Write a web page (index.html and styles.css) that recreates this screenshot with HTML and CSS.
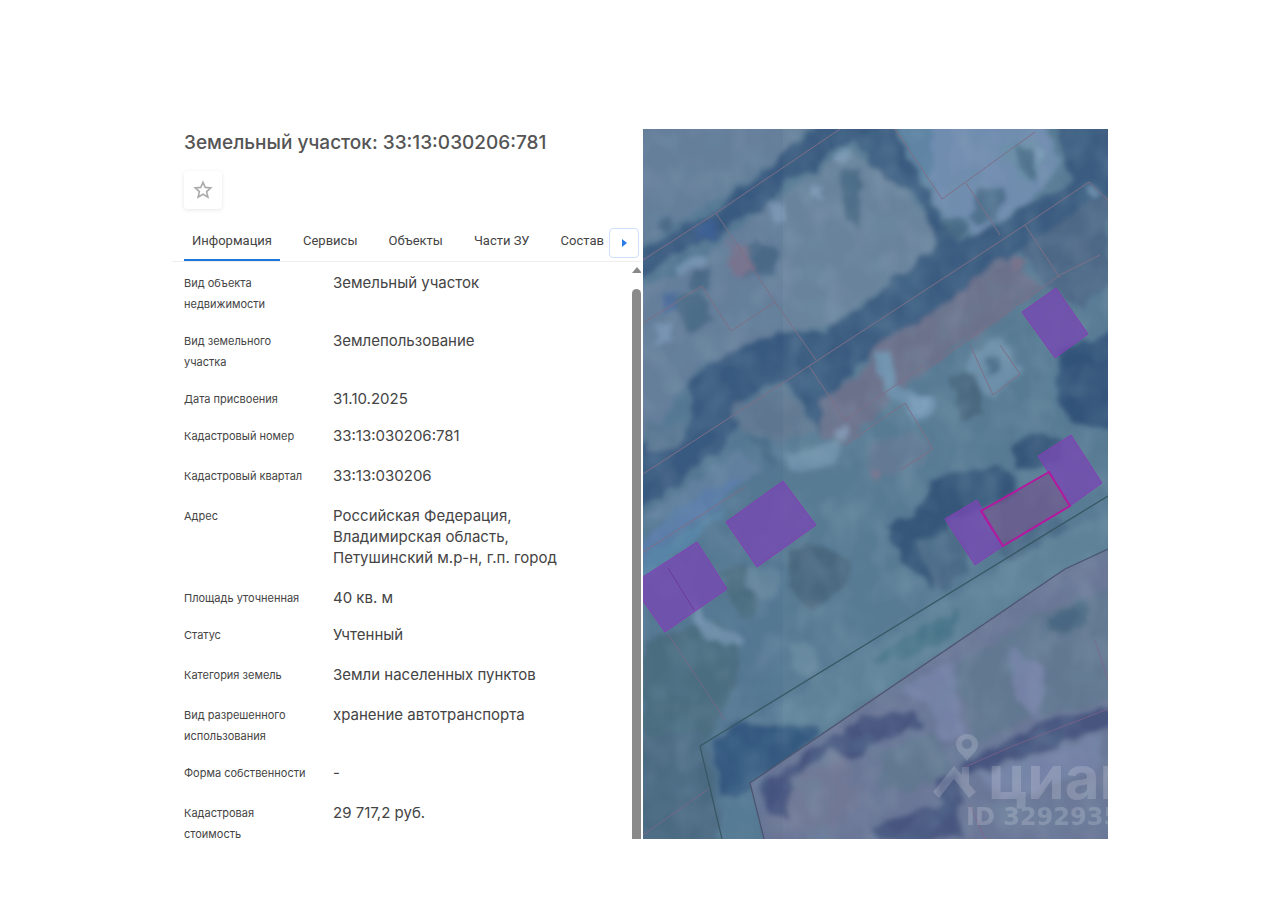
FILE: index.html
```html
<!DOCTYPE html>
<html lang="ru">
<head>
    <meta charset="UTF-8">
    <meta name="viewport" content="width=device-width, initial-scale=1.0">
    <title>Земельный участок: 33:13:030206:781</title>
    <link rel="stylesheet" href="styles.css">
</head>
<body>
    <main class="page">
        <section class="panel">
            <header class="panel-header">
                <h1>Земельный участок: 33:13:030206:781</h1>
                <button class="favorite" type="button" aria-label="В избранное">
                    <svg width="20" height="20" viewBox="0 0 20 20">
                        <path d="M10 2.2 12.2 7.4 17.8 7.9 13.6 11.6 14.9 17.1 10 14.2 5.1 17.1 6.4 11.6 2.2 7.9 7.8 7.4Z"/>
                    </svg>
                </button>
            </header>

            <nav class="tabs">
                <div class="tab-list">
                    <a class="tab active" href="#info">Информация</a>
                    <a class="tab" href="#services">Сервисы</a>
                    <a class="tab" href="#objects">Объекты</a>
                    <a class="tab" href="#parts">Части ЗУ</a>
                    <a class="tab" href="#structure">Состав</a>
                </div>
                <button class="tabs-next" type="button" aria-label="Дальше">
                    <svg width="5" height="8" viewBox="0 0 5 8"><path d="M0 0 5 4 0 8Z"/></svg>
                </button>
            </nav>

            <div class="content" id="info">
                <dl class="info">
                    <div class="row tight"><dt>Вид объекта недвижимости</dt><dd>Земельный участок</dd></div>
                    <div class="row tight"><dt>Вид земельного участка</dt><dd>Землепользование</dd></div>
                    <div class="row tight"><dt>Дата присвоения</dt><dd>31.10.2025</dd></div>
                    <div class="row"><dt>Кадастровый номер</dt><dd>33:13:030206:781</dd></div>
                    <div class="row"><dt>Кадастровый квартал</dt><dd>33:13:030206</dd></div>
                    <div class="row"><dt>Адрес</dt><dd>Российская Федерация, Владимирская область, Петушинский м.р-н, г.п. город</dd></div>
                    <div class="row tight"><dt>Площадь уточненная</dt><dd>40 кв. м</dd></div>
                    <div class="row"><dt>Статус</dt><dd>Учтенный</dd></div>
                    <div class="row"><dt>Категория земель</dt><dd>Земли населенных пунктов</dd></div>
                    <div class="row tight"><dt>Вид разрешенного использования</dt><dd>хранение автотранспорта</dd></div>
                    <div class="row"><dt>Форма собственности</dt><dd>-</dd></div>
                    <div class="row"><dt>Кадастровая стоимость</dt><dd>29 717,2 руб.</dd></div>
                </dl>
                <div class="scrollbar">
                    <svg width="10" height="6" viewBox="0 0 10 6"><path d="M5 0 10 6H0Z"/></svg>
                    <div class="thumb"></div>
                </div>
            </div>
        </section>

        <section class="map">
            <svg class="map-view" viewBox="643 129 465 710" preserveAspectRatio="xMidYMid slice">
                <defs>
                    <filter id="soft" x="-5%" y="-5%" width="110%" height="110%">
                        <feTurbulence type="fractalNoise" baseFrequency="0.07" numOctaves="1" seed="4" result="n"/>
                        <feDisplacementMap in="SourceGraphic" in2="n" scale="16" xChannelSelector="R" yChannelSelector="G"/>
                        <feGaussianBlur stdDeviation="2.5"/>
                    </filter>
                    <filter id="shade" x="0" y="0" width="100%" height="100%">
                        <feTurbulence type="fractalNoise" baseFrequency="0.03" numOctaves="2" seed="11"/>
                        <feColorMatrix values="0 0 0 0 0.16  0 0 0 0 0.31  0 0 0 0 0.4  2 0 0 0 -0.85"/>
                    </filter>
                    <filter id="light" x="0" y="0" width="100%" height="100%">
                        <feTurbulence type="fractalNoise" baseFrequency="0.04 0.03" numOctaves="2" seed="23"/>
                        <feColorMatrix values="0 0 0 0 0.53  0 0 0 0 0.62  0 0 0 0 0.7  2 0 0 0 -0.85"/>
                    </filter>
                </defs>

                <!-- снимок -->
                <rect x="643" y="129" width="465" height="710" fill="#587b94"/>
                <g filter="url(#soft)">
                    <path fill="#6a839d" d="M620 110H830L790 150 730 190 620 260ZM620 300 700 260 790 190 850 150 900 185 950 250 900 275 830 325 770 335 700 365 650 435 620 450Z"/>
                    <path fill="#5f84a4" d="M890 115H945L945 200 925 185Z"/>
                    <path fill="#6f8caf" d="M932 110H1045L1060 165 1035 200 975 235 945 220 932 195Z"/>
                    <path fill="#3b5b80" d="M630 260 690 222 718 212 728 195 745 185 770 168 785 148 805 140 825 115H885L905 150 925 185 945 225 960 242 1010 215 1070 185 1055 115H1120V190L1085 215 1035 240 1005 260 985 280 950 300 925 320 890 335 870 355 840 385 820 400 820 435 800 400 785 380 745 395 735 430 715 455 680 480 660 498 630 510V452L655 435 690 425 690 385 705 365 740 345 775 335 825 330 870 300 900 275 925 255 940 240 915 195 885 180 855 140 830 150 815 172 785 182 760 212 735 220 715 240 690 245 670 255 655 270 630 285Z"/>
                    <path fill="#5f7d95" d="M645 425 690 420 680 445 645 450Z"/>
                    <path fill="#4d6886" d="M1040 235 1108 190V280L1080 310 1045 285 1020 250Z"/>
                    <path fill="#6c718b" d="M1005 255 1045 290 960 345 890 400 845 445 820 435 820 400 865 370 875 345 930 315 950 300Z"/>
                    <path fill="#637a93" d="M730 410 780 382 800 405 820 430 785 440 740 430Z"/>
                    <path fill="#6d91ad" d="M875 350 890 352 895 385 935 395 935 415 915 425 895 400 875 375Z"/>
                    <path fill="#6684a2" d="M740 450 760 470 720 490 660 520 640 520 690 485 730 455Z"/>
                    <path fill="#5f82ad" d="M640 545 680 505 745 475 715 510 690 525 640 560Z"/>
                    <path fill="#5b8aab" d="M640 560 720 510 740 495 700 535 670 560 640 580Z"/>
                    <path fill="#637994" d="M868 445 910 430 935 450 900 475 870 475Z"/>
                    <path fill="#6d8fa9" d="M970 350 1000 340 1020 370 995 400 965 385ZM785 455 840 440 835 460 790 475ZM1000 150 1030 140 1050 160 1025 180Z"/>
                    <path fill="#305379" d="M1060 350 1115 330V430L1070 420 1055 395Z"/>
                    <path fill="#365779" d="M1015 445 1040 430 1060 440 1060 465 1015 470ZM885 525 915 515 930 485 960 470 1005 468 1020 490 985 510 950 520 945 560 935 590 905 565Z"/>
                    <path fill="#48687f" d="M950 375 975 375 985 415 960 420ZM790 550 820 545 850 560 845 590 810 610 790 590Z"/>
                    <path fill="#4b6b87" d="M990 545 1060 515 1080 545 1020 565ZM915 540 960 530 970 570 940 590Z"/>
                    <path fill="#4d7080" d="M643 640 720 620 740 650 730 700 710 740 643 760ZM720 570 750 565 760 610 740 620Z"/>
                    <path fill="#4d6d83" d="M630 740 700 730 715 770 720 850H630Z"/>
                    <path fill="#68899f" d="M750 565 780 570 775 600 745 590ZM790 640 820 650 810 680 790 670Z"/>
                    <path fill="#5f8299" d="M740 728 870 645 1065 530 1108 515 1108 550 1065 570 870 700 820 730 770 728Z"/>
                    <path fill="#49748a" d="M870 660 905 635 960 610 950 640 900 660Z"/>
                    <path fill="#345a80" d="M710 745 735 725 820 725 815 740 755 785 745 800 725 795Z"/>
                    <path fill="#5a7f96" d="M722 800 750 795 765 850H725Z"/>
                    <path fill="#4f7088" d="M670 300 700 290 715 320 690 335Z"/>
                </g>
                <path fill="#6b7797" d="M750 783 870 700 1065 569 1108 550V839H764Z"/>
                <g filter="url(#soft)">
                    <path fill="#46547f" d="M757 788 820 745 860 718 915 712 925 725 870 745 850 765 830 745 800 775 790 820 770 815ZM960 765 1000 745 1050 720 1115 708V725L1030 755 970 775ZM935 780 955 770 965 800 945 810ZM870 830 950 800 970 835 900 845Z"/>
                    <path fill="#627790" d="M955 665 1000 640 1040 610 1115 590V700L1040 715 975 745ZM880 755 935 730 950 770 920 790 880 790Z"/>
                    <path fill="#7481a6" d="M900 690 950 660 965 740 940 740 930 705ZM1010 650 1045 670 1040 720 1015 700ZM980 775 1100 735 1100 770 1000 800Z"/>
                    <path fill="#707895" d="M790 780 840 750 860 800 830 830 790 830ZM765 815 782 815 782 845 770 845Z"/>
                </g>
                <g filter="url(#soft)" opacity="0.65">
                    <path fill="#3e607b" d="M660 220 672 220 670 232 658 230ZM695 270 712 268 705 290 690 285ZM735 250 758 240 780 255 775 275 745 275ZM838 170 860 170 860 230 845 215ZM980 190 1005 190 995 225 970 220ZM1015 145 1030 150 1035 180 1020 170ZM985 360 1000 355 1000 370 988 375ZM1045 620 1080 600 1090 620 1060 635ZM945 215 970 225 960 240 940 235ZM750 435 770 470 780 465 765 435Z"/>
                    <path fill="#87a6c3" d="M810 185 825 185 825 197 810 197ZM770 205 785 203 785 218 772 218ZM838 148 852 150 848 162 835 160ZM1085 185 1098 190 1095 198 1085 195ZM830 430 850 425 845 440 830 440ZM655 325 670 320 675 340 655 345ZM1030 150 1045 150 1040 165ZM690 600 715 625 745 640 740 650 700 635ZM905 395 930 395 925 415 910 415ZM675 265 700 255 705 262 680 275Z"/>
                    <path fill="#4163a0" d="M660 295 680 290 678 312 662 310ZM695 225 715 220 715 240 695 240Z"/>
                    <path fill="#8b7088" d="M725 240 740 245 755 270 735 275ZM1010 255 1025 260 1015 275ZM870 470 885 475 880 485Z"/>
                </g>
                <rect x="643" y="129" width="465" height="710" filter="url(#shade)" opacity="0.3"/>
                <rect x="643" y="129" width="465" height="710" filter="url(#light)" opacity="0.13"/>
                <rect x="643" y="129" width="140" height="710" fill="#2c4d80" opacity="0.07"/>

                <!-- границы участков -->
                <g class="bounds">
                    <path d="M643 260 716 213 840 129M716 213 775 302 816 360M643 323 702 286 731 331 775 302M643 474 809 366 1025 225 1089 182 1108 200M809 366 845 420 925 365M895 129 942 199 1035 132M966 183 1000 235M1025 225 1060 278M643 552 745 487M845 445 905 403 933 449 900 470M925 370 1060 275 1100 255M970 345 993 395 1020 374 1000 345"/>
                    <path class="red" d="M668 634 725 720M643 835 710 788M965 767 1015 745 1108 709M970 805 985 839M1095 640 1108 680"/>
                </g>
                <path class="road" d="M722 839 700 746 1108 496"/>
                <path class="road dim" d="M764 839 750 783 1065 569 1108 549"/>

                <!-- объекты -->
                <g class="buildings">
                    <path d="M1022 312 1056 288 1088 334 1055 358Z"/>
                    <path d="M726 522 783 481 816 525 757 567Z"/>
                    <path d="M643 577 697 542 727 589 665 632 643 601Z"/>
                    <path d="M1038 456 1071 435 1102 483 1070 506Z"/>
                    <path d="M945 519 977 500 1003 546 975 565Z"/>
                </g>
                <path class="split" d="M668 568 694 610"/>
                <path class="selected" d="M981 511 1049 472 1070 506 1003 546Z"/>

                <!-- водяной знак -->
                <g class="watermark">
                    <path fill-rule="evenodd" d="M967 761C964 756 956 751 956 744A11 10 0 0 1 978 744C978 751 970 756 967 761ZM967 739A5 5 0 1 0 967 749A5 5 0 1 0 967 739Z"/>
                    <path d="M933 792 954 766 962 775V767H969V784L976 792 969 798 954 779 939 798Z"/>
                    <text class="brand" x="988" y="799">циан</text>
                    <text class="brand-id" x="966" y="825">ID 3292935</text>
                </g>
            </svg>
        </section>
    </main>
</body>
</html>
```
FILE: styles.css
```css
* {
    box-sizing: border-box;
}
body {
    margin: 0;
    background-color: #fff;
    color: #444;
    font-family: Inter, "Liberation Sans", sans-serif;
}
.page {
    display: grid;
    grid-template-columns: 469fr 465fr;
    gap: 2px;
    height: 100vh;
    padding: 129px 172px 66px;
}
.panel {
    display: flex;
    flex-direction: column;
    min-width: 0;
    min-height: 0;
}
.panel-header {
    padding-left: 12px;
}
h1 {
    margin: 0 0 14px;
    font-size: 19px;
    line-height: 28px;
    font-weight: 500;
    color: #555;
}
.favorite {
    display: flex;
    align-items: center;
    justify-content: center;
    width: 38px;
    height: 38px;
    padding: 0;
    border: none;
    border-radius: 4px;
    background-color: #fff;
    box-shadow: 0 1px 4px rgba(0, 0, 0, 0.1);
}
.favorite path {
    fill: none;
    stroke: #aaa;
    stroke-width: 1.6;
}
.tabs {
    display: flex;
    justify-content: space-between;
    align-items: flex-end;
    margin-top: 16px;
    padding-left: 12px;
    border-bottom: 1px solid #eee;
}
.tab-list {
    display: flex;
    gap: 15px;
}
.tab {
    padding: 6px 8px 8px;
    border-bottom: 2px solid transparent;
    font-family: Roboto, "Liberation Sans", sans-serif;
    font-size: 13px;
    line-height: 20px;
    color: #444;
    text-decoration: none;
    white-space: nowrap;
}
.tab:last-child {
    padding-right: 0;
}
.tab.active {
    border-bottom-color: #1c76dc;
}
.tabs-next {
    display: flex;
    flex-shrink: 0;
    align-items: center;
    justify-content: center;
    width: 30px;
    height: 30px;
    margin: 0 2px 3px 0;
    padding: 0;
    border: 1px solid #cfe0fa;
    border-radius: 4px;
    background-color: #fff;
}
.tabs-next path {
    fill: #2b7de9;
}
.content {
    display: flex;
    flex: 1;
    min-height: 0;
    overflow: hidden;
}
.info {
    flex: 1;
    margin: 0;
    padding: 10px 0 0 12px;
}
.row {
    display: grid;
    grid-template-columns: 130px 232px;
    column-gap: 19px;
    margin-bottom: 19px;
    line-height: 21px;
}
.row.tight {
    margin-bottom: 16px;
}
dt {
    padding-top: 1px;
    margin-bottom: -1px;
    font-size: 11px;
}
dd {
    margin: 0;
    font-size: 15px;
}
.scrollbar {
    display: flex;
    flex-direction: column;
    align-items: center;
    gap: 16px;
    width: 9px;
    padding-top: 5px;
}
.scrollbar path {
    fill: #888;
}
.thumb {
    flex: 1;
    width: 9px;
    border-radius: 5px 5px 0 0;
    background-color: #8a8a8a;
}
.map {
    min-width: 0;
    min-height: 0;
    overflow: hidden;
}
.map-view {
    display: block;
    width: 100%;
    height: 100%;
}
.bounds path {
    fill: none;
    stroke: #7d6f86;
    stroke-width: 1;
}
.bounds .red {
    stroke: #85648a;
    opacity: 0.7;
}
.road {
    fill: none;
    stroke: #385864;
    stroke-width: 1.3;
}
.road.dim {
    stroke: #4b5570;
}
.buildings path {
    fill: #7648b2;
    fill-opacity: 0.78;
    stroke: #8540b5;
    stroke-width: 1;
}
.split {
    stroke: #6c3a9c;
}
.selected {
    fill: #73508c;
    fill-opacity: 0.6;
    stroke: #b4189f;
    stroke-width: 2;
}
.watermark {
    fill: #fff;
    opacity: 0.17;
}
.brand {
    font-family: Inter, sans-serif;
    font-size: 60px;
    font-weight: 700;
}
.brand-id {
    font-family: "DejaVu Sans", sans-serif;
    font-size: 24px;
    font-weight: 700;
}
```
